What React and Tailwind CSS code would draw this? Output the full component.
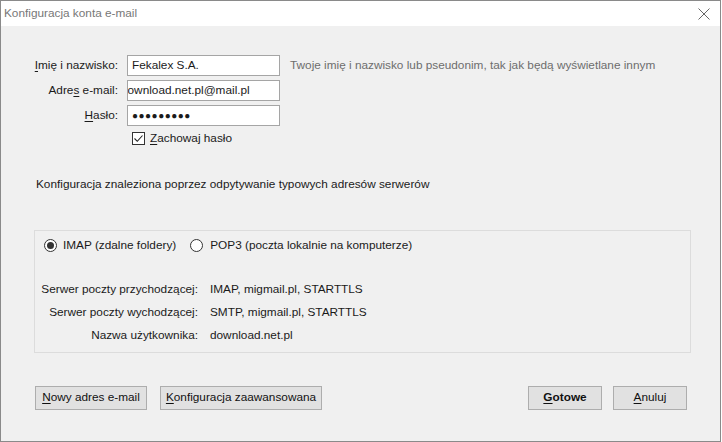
import React from 'react';

const U = ({ children }) => <span className="underline underline-offset-[2px] decoration-1">{children}</span>;

function Field({ label, children, hint }) {
  return (
    <div className="flex items-center h-[21px]">
      <div className="w-[85px] flex justify-end whitespace-nowrap pr-[1px]">{label}</div>
      <div className="ml-[8px] w-[153px] h-[21px] bg-white border border-[#a5a5a5] flex items-center px-[4px] overflow-hidden whitespace-nowrap">
        {children}
      </div>
      {hint && <div className="ml-[10px] text-[#6d6d6d] whitespace-nowrap">{hint}</div>}
    </div>
  );
}

function Btn({ children, bold, className }) {
  return (
    <button className={"h-[24px] bg-[#e1e1e1] border border-[#adadad] text-[#111] flex items-center justify-center whitespace-nowrap " + (bold ? "font-bold " : "") + className}>
      {children}
    </button>
  );
}

function Radio({ checked }) {
  return (
    <span className="w-[13px] h-[13px] rounded-full border border-[#333] bg-white flex items-center justify-center">
      {checked && <span className="w-[7px] h-[7px] rounded-full bg-[#333]" />}
    </span>
  );
}

export default function App() {
  return (
    <div className="w-[721px] h-[442px] bg-[#f0f0f0] border border-[#8a8a8a] flex flex-col text-[11.8px] text-[#1a1a1a] overflow-hidden" style={{ fontFamily: '"Liberation Sans", Arial, sans-serif' }}>
      <div className="h-[25px] bg-white flex items-center justify-between pl-[3px] pr-[10px] text-[#777] shrink-0">
        <span>Konfiguracja konta e-mail</span>
        <svg width="12" height="12" viewBox="0 0 12 12" className="mt-[1px]">
          <path d="M0.5 0.5 L11.5 11.5 M11.5 0.5 L0.5 11.5" stroke="#666" strokeWidth="1" />
        </svg>
      </div>

      <div className="pl-[33px] pt-[29px] flex flex-col">
        <div className="flex flex-col gap-[4px]">
          <Field label={<span><U>I</U>mię i nazwisko:</span>} hint="Twoje imię i nazwisko lub pseudonim, tak jak będą wyświetlane innym">
            Fekalex S.A.
          </Field>
          <Field label={<span>Adre<U>s</U> e-mail:</span>}>
            <span className="-ml-[11px]">download.net.pl@mail.pl</span>
          </Field>
          <Field label={<span><U>H</U>asło:</span>}>
            <span className="text-[10px] tracking-[0.5px] leading-none">●●●●●●●●●</span>
          </Field>
        </div>

        <div className="flex items-center ml-[98px] mt-[5px] h-[15px]">
          <span className="w-[13px] h-[13px] border border-[#333] bg-white flex items-center justify-center">
            <svg width="11" height="11" viewBox="0 0 11 11">
              <path d="M1.5 5.5 L4.3 8.3 L9.5 2.5" fill="none" stroke="#222" strokeWidth="1.1" />
            </svg>
          </span>
          <span className="ml-[5px]"><U>Z</U>achowaj hasło</span>
        </div>

        <div className="mt-[30px] ml-[2px]">Konfiguracja znaleziona poprzez odpytywanie typowych adresów serwerów</div>

        <div className="mt-[36px] w-[657px] h-[123px] border border-[#dcdcdc] flex flex-col">
          <div className="flex items-center mt-[8px] ml-[9px] h-[14px]">
            <Radio checked />
            <span className="ml-[6px]">IMAP (zdalne foldery)</span>
            <span className="ml-[14px]"><Radio /></span>
            <span className="ml-[7px]">POP3 (poczta lokalnie na komputerze)</span>
          </div>
          <div className="mt-[30px] flex flex-col gap-[9px]">
            {[
              ['Serwer poczty przychodzącej:', 'IMAP, migmail.pl, STARTTLS'],
              ['Serwer poczty wychodzącej:', 'SMTP, migmail.pl, STARTTLS'],
              ['Nazwa użytkownika:', 'download.net.pl'],
            ].map(([k, v]) => (
              <div key={k} className="flex items-center h-[14px]">
                <div className="w-[163px] text-right whitespace-nowrap">{k}</div>
                <div className="ml-[12px]">{v}</div>
              </div>
            ))}
          </div>
        </div>

        <div className="mt-[33px] flex items-center pl-[1px] pr-[33px]">
          <Btn className="w-[112px]"><span><U>N</U>owy adres e-mail</span></Btn>
          <Btn className="w-[162px] ml-[13px]"><span><U>K</U>onfiguracja zaawansowana</span></Btn>
          <div className="flex-1" />
          <Btn bold className="w-[74px] border-[#7a7a7a]"><span><U>G</U>otowe</span></Btn>
          <Btn className="w-[74px] ml-[11px]"><span><U>A</U>nuluj</span></Btn>
        </div>
      </div>
    </div>
  );
}
